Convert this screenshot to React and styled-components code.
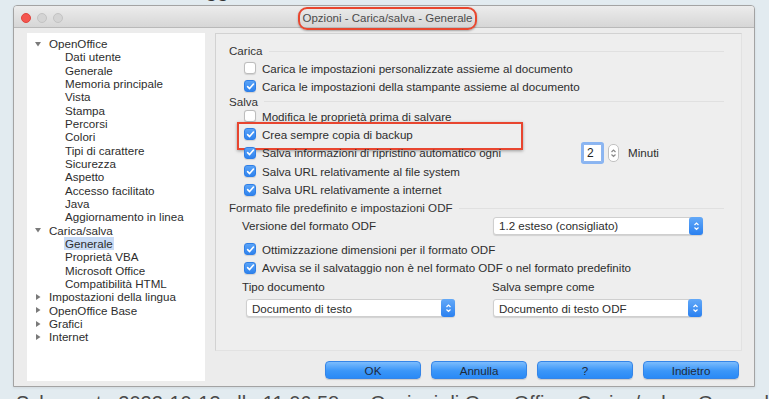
import React from "react";
import styled, { createGlobalStyle } from "styled-components";

const GlobalStyle = createGlobalStyle`
  html, body { margin: 0; padding: 0; background: #e2ebf0; overflow: hidden; }
  body { font-family: "Liberation Sans", Arial, sans-serif; }
  * { box-sizing: border-box; }
`;

const Page = styled.div`
  width: 769px;
  height: 399px;
  overflow: hidden;
  display: flex;
  flex-direction: column;
  padding-left: 13px;
`;

const TopCaption = styled.div`
  height: 7px;
  padding-bottom: 5px;
  padding-left: 22px;
  overflow: hidden;
  display: flex;
  align-items: flex-end;
  font-size: 21px;
  line-height: 21px;
  color: #333;
  white-space: nowrap;
`;

const BottomCaption = styled.div`
  font-size: 20px;
  line-height: 22px;
  margin-top: 5px;
  color: #4a4a4a;
  white-space: nowrap;
  padding-left: 3px;
`;

const Window = styled.div`
  width: 742px;
  height: 382px;
  border: 1px solid #a3a3a3;
  border-radius: 4px 4px 0 0;
  background: #ececec;
  display: flex;
  flex-direction: column;
  flex: none;
  box-shadow: 0 1px 3px rgba(0, 0, 0, 0.08);
`;

const TitleBar = styled.div`
  height: 22px;
  flex: none;
  display: grid;
  grid-template-columns: 1fr auto 1fr;
  align-items: center;
  background: linear-gradient(#ececec, #d6d6d6);
  border-bottom: 1px solid #b9b9b9;
  border-radius: 3px 3px 0 0;
  padding-left: 7px;
`;

const Lights = styled.div`
  display: flex;
  gap: 6px;
  align-items: center;
`;

const Light = styled.span`
  width: 10px;
  height: 10px;
  border-radius: 50%;
  background: ${(p) => (p.$red ? "#f4564f" : "#d4d4d4")};
  border: 1px solid ${(p) => (p.$red ? "#e0443d" : "#c3c3c3")};
`;

const Title = styled.div`
  font-size: 11.5px;
  line-height: 13px;
  color: #4b4b4b;
  padding: 3px 2px;
  border: 2.5px solid #e8472f;
  border-radius: 9px;
  box-shadow: 0 1px 2px rgba(0, 0, 0, 0.3);
  white-space: nowrap;
  margin-top: 1px;
`;

const Body = styled.div`
  flex: 1;
  display: flex;
  gap: 10px;
  padding: 5px 12px 5px 13px;
  min-height: 0;
`;

const Tree = styled.div`
  width: 178px;
  flex: none;
  background: #fff;
  padding-top: 4px;
  display: flex;
  flex-direction: column;
  font-size: 11.6px;
  color: #2d2d2d;
`;

const TreeItem = styled.div`
  height: 13.33px;
  display: flex;
  align-items: center;
  gap: 8px;
  padding-left: ${(p) => (p.$child ? 38 : 8)}px;
  white-space: nowrap;
`;

const Sel = styled.span`
  background: ${(p) => (p.$on ? "#c9dcf6" : "transparent")};
  padding: 0 1px;
  margin-left: -1px;
`;

const RightCol = styled.div`
  flex: 1;
  display: flex;
  flex-direction: column;
`;

const Panel = styled.div`
  height: 318px;
  border: 1px solid #d2d2d2;
  border-right-color: #e2e2e2;
  border-bottom-color: #e2e2e2;
  background: #eeeeee;
  padding: 8px 17px 0 13px;
  display: flex;
  flex-direction: column;
  font-size: 11.6px;
  color: #2d2d2d;
`;

const Header = styled.div`
  height: ${(p) => p.$h}px;
  display: flex;
  align-items: center;
  gap: 6px;
  white-space: nowrap;
  color: #333;
  &::after {
    content: "";
    flex: 1;
    height: 1px;
    background: #e0e0e0;
    margin-top: 1px;
  }
`;

const Row = styled.div`
  height: ${(p) => p.$h}px;
  margin-top: ${(p) => p.$mt || 0}px;
  display: flex;
  align-items: center;
  padding-left: ${(p) => p.$pl}px;
  white-space: nowrap;
  position: relative;
  ${(p) =>
    p.$mark &&
    `&::after {
      content: "";
      position: absolute;
      left: 8px;
      top: -3px;
      width: 282px;
      height: 24px;
      border: 2.5px solid #e8452f;
      box-shadow: 0 1px 3px rgba(0,0,0,0.35);
    }`}
`;

const Box = styled.span`
  width: 12px;
  height: 12px;
  flex: none;
  border-radius: 3px;
  margin-right: 6px;
  display: inline-flex;
  align-items: center;
  justify-content: center;
  background: ${(p) => (p.$on ? "linear-gradient(#5aa3f7, #2f83ee)" : "#fff")};
  border: 1px solid ${(p) => (p.$on ? "#2f7fe6" : "#bdbdbd")};
  box-shadow: 0 0.5px 1px rgba(0, 0, 0, 0.12);
`;

const Label = styled.span`
  width: ${(p) => (p.$w ? `${p.$w}px` : "auto")};
  flex: none;
`;

const SpinField = styled.span`
  width: 19px;
  height: 18px;
  background: #fff;
  border: 1px solid #8fb6ee;
  box-shadow: 0 0 0 2px #8ab5f2;
  border-radius: 1px;
  padding-left: 3px;
  display: inline-flex;
  align-items: center;
  font-size: 12px;
  color: #222;
`;

const Stepper = styled.span`
  width: 11px;
  height: 18px;
  margin-left: 6px;
  border: 1px solid #c2c2c2;
  border-radius: 5px;
  background: #fff;
  display: inline-flex;
  flex-direction: column;
  align-items: center;
  justify-content: center;
`;

const Minuti = styled.span`
  margin-left: 9px;
`;

const Select = styled.div`
  width: ${(p) => p.$w}px;
  height: 18px;
  margin-left: ${(p) => p.$ml || 0}px;
  background: #fff;
  border: 1px solid #cfcfcf;
  border-radius: 3px;
  box-shadow: 0 1px 1px rgba(0, 0, 0, 0.12);
  display: flex;
  align-items: center;
  justify-content: space-between;
  padding-left: 5px;
  flex: none;
`;

const SelectBtn = styled.span`
  width: 14px;
  height: 18px;
  margin-right: -1px;
  border-radius: 3px;
  background: linear-gradient(#63a9f8, #2a80f0);
  display: inline-flex;
  align-items: center;
  justify-content: center;
`;

const ButtonRow = styled.div`
  display: flex;
  justify-content: flex-end;
  gap: 10px;
  margin-top: 10px;
  padding-right: 3px;
`;

const Button = styled.button`
  width: 96px;
  height: 18px;
  padding: 0;
  border: 1px solid #3585e8;
  border-radius: 4px;
  background: linear-gradient(#7cbcfd, #3b96f8 55%, #2a8af6);
  font-family: "Liberation Sans", Arial, sans-serif;
  font-size: 11.6px;
  color: #1f2a3a;
  box-shadow: 0 1px 1px rgba(0, 0, 0, 0.15);
`;

const Tri = ({ open }) => (
  <svg width="6" height="6" viewBox="0 0 6 6" style={{ flex: "none" }}>
    {open ? <path d="M0 1 L6 1 L3 5.5 Z" fill="#7a7a7a" /> : <path d="M1 0 L5.5 3 L1 6 Z" fill="#7a7a7a" />}
  </svg>
);

const Check = () => (
  <svg width="9" height="9" viewBox="0 0 9 9">
    <path d="M1.6 4.6 L3.6 6.6 L7.5 2" stroke="#fff" strokeWidth="1.6" fill="none" strokeLinecap="round" strokeLinejoin="round" />
  </svg>
);

const UpDown = ({ color = "#fff" }) => (
  <svg width="7" height="12" viewBox="0 0 7 12">
    <path d="M1.5 5 L3.5 3 L5.5 5" stroke={color} strokeWidth="1.2" fill="none" />
    <path d="M1.5 7.5 L3.5 9.5 L5.5 7.5" stroke={color} strokeWidth="1.2" fill="none" />
  </svg>
);

const tree = [
  { t: "OpenOffice", open: true },
  { t: "Dati utente", c: 1 },
  { t: "Generale", c: 1 },
  { t: "Memoria principale", c: 1 },
  { t: "Vista", c: 1 },
  { t: "Stampa", c: 1 },
  { t: "Percorsi", c: 1 },
  { t: "Colori", c: 1 },
  { t: "Tipi di carattere", c: 1 },
  { t: "Sicurezza", c: 1 },
  { t: "Aspetto", c: 1 },
  { t: "Accesso facilitato", c: 1 },
  { t: "Java", c: 1 },
  { t: "Aggiornamento in linea", c: 1 },
  { t: "Carica/salva", open: true },
  { t: "Generale", c: 1, sel: 1 },
  { t: "Proprietà VBA", c: 1 },
  { t: "Microsoft Office", c: 1 },
  { t: "Compatibilità HTML", c: 1 },
  { t: "Impostazioni della lingua", open: false },
  { t: "OpenOffice Base", open: false },
  { t: "Grafici", open: false },
  { t: "Internet", open: false },
];

const CheckRow = ({ on, children, h = 18, mark, w, extra, mt }) => (
  <Row $h={h} $pl={15} $mark={mark} $mt={mt}>
    <Box $on={on}>{on && <Check />}</Box>
    <Label $w={w}>{children}</Label>
    {extra}
  </Row>
);

export default function App() {
  return (
    <>
      <GlobalStyle />
      <Page>
        <TopCaption>
          <span>Finestra di salvataggio</span>
        </TopCaption>
        <Window>
          <TitleBar>
            <Lights>
              <Light $red />
              <Light />
              <Light />
            </Lights>
            <Title>Opzioni - Carica/salva - Generale</Title>
            <span />
          </TitleBar>
          <Body>
            <Tree>
              {tree.map((it, i) =>
                it.c ? (
                  <TreeItem key={i} $child>
                    <Sel $on={it.sel}>{it.t}</Sel>
                  </TreeItem>
                ) : (
                  <TreeItem key={i}>
                    <Tri open={it.open} />
                    <span>{it.t}</span>
                  </TreeItem>
                )
              )}
            </Tree>
            <RightCol>
              <Panel>
                <Header $h={17}>Carica</Header>
                <CheckRow on={false}>Carica le impostazioni personalizzate assieme al documento</CheckRow>
                <CheckRow on>Carica le impostazioni della stampante assieme al documento</CheckRow>
                <Header $h={12}>Salva</Header>
                <CheckRow on={false}>Modifica le proprietà prima di salvare</CheckRow>
                <CheckRow on mark>Crea sempre copia di backup</CheckRow>
                <CheckRow
                  on
                  w={321}
                  h={19}
                  extra={
                    <>
                      <SpinField>2</SpinField>
                      <Stepper>
                        <UpDown color="#8a8a8a" />
                      </Stepper>
                      <Minuti>Minuti</Minuti>
                    </>
                  }
                >
                  Salva informazioni di ripristino automatico ogni
                </CheckRow>
                <CheckRow on>Salva URL relativamente al file system</CheckRow>
                <CheckRow on h={19}>Salva URL relativamente a internet</CheckRow>
                <Header $h={17}>Formato file predefinito e impostazioni ODF</Header>
                <Row $h={19} $pl={13}>
                  <Label $w={251}>Versione del formato ODF</Label>
                  <Select $w={210}>
                    <span>1.2 esteso (consigliato)</span>
                    <SelectBtn>
                      <UpDown />
                    </SelectBtn>
                  </Select>
                </Row>
                <CheckRow on mt={5}>Ottimizzazione dimensioni per il formato ODF</CheckRow>
                <CheckRow on h={19}>Avvisa se il salvataggio non è nel formato ODF o nel formato predefinito</CheckRow>
                <Row $h={18} $pl={13}>
                  <Label $w={250}>Tipo documento</Label>
                  <Label>Salva sempre come</Label>
                </Row>
                <Row $h={18} $pl={17} $mt={4}>
                  <Select $w={209}>
                    <span>Documento di testo</span>
                    <SelectBtn>
                      <UpDown />
                    </SelectBtn>
                  </Select>
                  <Select $w={209} $ml={38}>
                    <span>Documento di testo ODF</span>
                    <SelectBtn>
                      <UpDown />
                    </SelectBtn>
                  </Select>
                </Row>
              </Panel>
              <ButtonRow>
                <Button>OK</Button>
                <Button>Annulla</Button>
                <Button>?</Button>
                <Button>Indietro</Button>
              </ButtonRow>
            </RightCol>
          </Body>
        </Window>
        <BottomCaption>Schermata 2022-10-13 alle 11.06.58 — Opzioni di OpenOffice, Carica/salva, Generale e copia di backup</BottomCaption>
      </Page>
    </>
  );
}
